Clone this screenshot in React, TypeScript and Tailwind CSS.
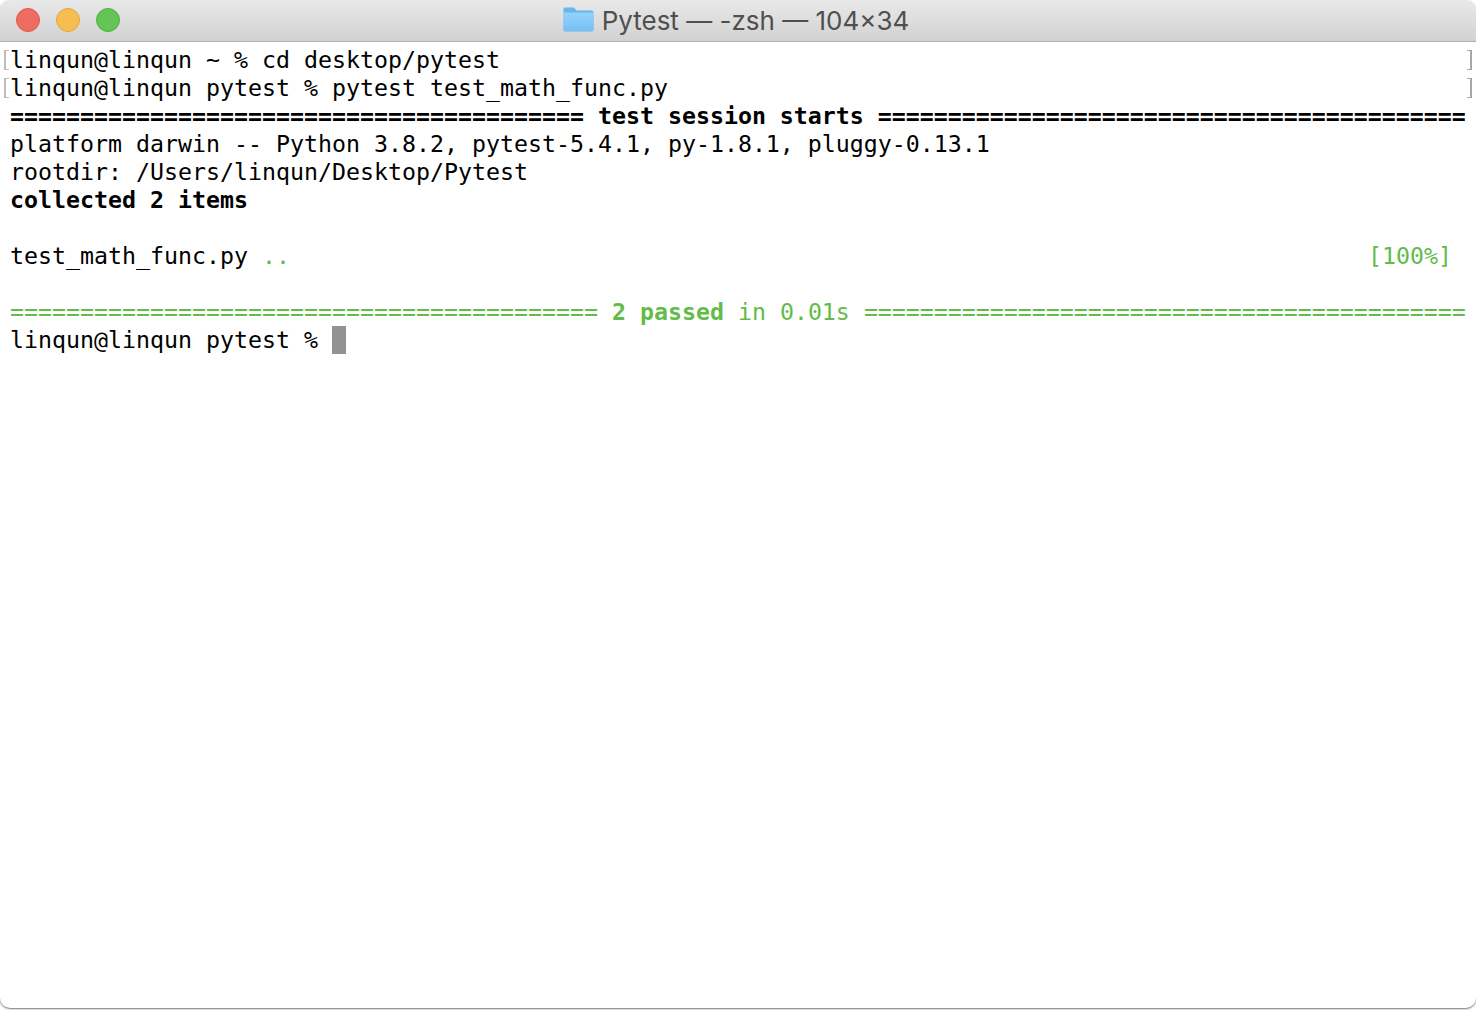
export default function App() {
  const mono = "font-['DejaVu_Sans_Mono','Liberation_Mono',monospace] text-[23.25px] leading-[28px] whitespace-pre";
  const Bracket = ({ side }: { side: "l" | "r" }) => (
    <span
      className={
        side === "l"
          ? "block w-[5px] h-[20px] border-l-2 border-t border-b border-[#bdbdbd]"
          : "block w-[5px] h-[20px] border-r-2 border-t border-b border-[#a8a8a8]"
      }
    />
  );
  return (
    <div className="w-[1476px] h-[1010px] bg-white overflow-hidden">
      <div className="h-[1008px] rounded-[10px] overflow-hidden bg-white flex flex-col shadow-[0_1px_2px_rgba(0,0,0,0.55)]">
        <header className="h-[42px] shrink-0 flex items-center justify-center relative border-b border-[#b1b1b1] bg-gradient-to-b from-[#e9e9e9] to-[#d2d2d2]">
          <div className="absolute left-[16px] top-[8px] flex gap-[16px]">
            <span className="w-[24px] h-[24px] rounded-full bg-[#ef6c61] border border-[#de5a50]" />
            <span className="w-[24px] h-[24px] rounded-full bg-[#f6be50] border border-[#e0a63e]" />
            <span className="w-[24px] h-[24px] rounded-full bg-[#62c554] border border-[#52af45]" />
          </div>
          <div className="flex items-center gap-[8px] pr-[4px]">
            <svg width="31" height="25" viewBox="0 0 31 25" className="-mt-[2px]">
              <defs>
                <linearGradient id="folderBody" x1="0" y1="0" x2="0" y2="1">
                  <stop offset="0" stopColor="#93d3fb" />
                  <stop offset="1" stopColor="#78c0f4" />
                </linearGradient>
              </defs>
              <path d="M0.5 2.5C0.5 1.2 1.4 0.5 2.5 0.5H9.5C10.8 0.5 11.4 1 12.2 1.9L13.6 3.6H28.5C29.7 3.6 30.5 4.4 30.5 5.6V22.5C30.5 23.8 29.7 24.5 28.5 24.5H2.5C1.3 24.5 0.5 23.8 0.5 22.5Z" fill="#67b6ed" />
              <path d="M0.5 7.2C0.5 6.2 1.3 5.5 2.3 5.5H28.7C29.7 5.5 30.5 6.2 30.5 7.2V22.5C30.5 23.5 29.7 24 28.7 24H2.3C1.3 24 0.5 23.5 0.5 22.5Z" fill="url(#folderBody)" />
            </svg>
            <span className="font-['Inter',sans-serif] text-[26px] leading-[32px] text-[#4f4f4f]">Pytest — -zsh — 104×34</span>
          </div>
        </header>
        <main className={`flex-1 pt-[4px] text-black ${mono}`}>
          <div className="flex items-center h-[28px] px-[4px]">
            <Bracket side="l" />
            <span className="ml-[1px]">linqun@linqun ~ % cd desktop/pytest</span>
            <span className="ml-auto"><Bracket side="r" /></span>
          </div>
          <div className="flex items-center h-[28px] px-[4px]">
            <Bracket side="l" />
            <span className="ml-[1px]">linqun@linqun pytest % pytest test_math_func.py</span>
            <span className="ml-auto"><Bracket side="r" /></span>
          </div>
          <div className="h-[28px] pl-[10px] font-bold">{"=".repeat(41)} test session starts {"=".repeat(42)}</div>
          <div className="h-[28px] pl-[10px]">platform darwin -- Python 3.8.2, pytest-5.4.1, py-1.8.1, pluggy-0.13.1</div>
          <div className="h-[28px] pl-[10px]">rootdir: /Users/linqun/Desktop/Pytest</div>
          <div className="h-[28px] pl-[10px] font-bold">collected 2 items</div>
          <div className="h-[28px]" />
          <div className="h-[28px] pl-[10px] pr-[24px] flex justify-between">
            <span>test_math_func.py <span className="text-[#62bb4a]">..</span></span>
            <span className="text-[#62bb4a]">[100%]</span>
          </div>
          <div className="h-[28px]" />
          <div className="h-[28px] pl-[10px] text-[#62bb4a]">
            {"=".repeat(42)} <span className="font-bold">2 passed</span> in 0.01s {"=".repeat(43)}
          </div>
          <div className="h-[28px] pl-[10px] flex items-center">
            <span>linqun@linqun pytest % </span>
            <span className="w-[14px] h-[28px] bg-[#929292]" />
          </div>
        </main>
      </div>
    </div>
  );
}
